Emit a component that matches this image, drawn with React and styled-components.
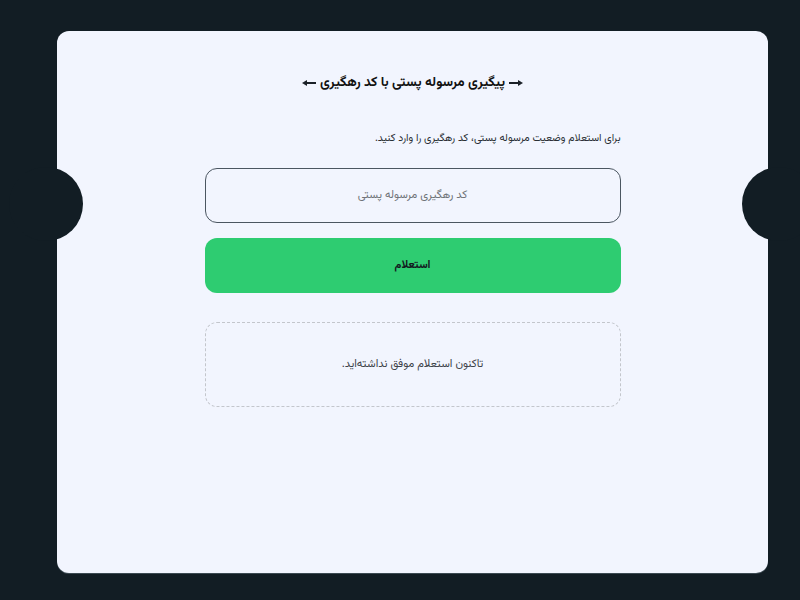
import React from "react";
import styled, { createGlobalStyle } from "styled-components";

const Global = createGlobalStyle`
  html, body { margin: 0; padding: 0; background: #121d24; }
  body { font-family: "Vazirmatn", "Noto Sans Arabic", "DejaVu Sans", sans-serif; }
  * { box-sizing: border-box; }
`;

const Page = styled.div`
  width: 800px;
  height: 600px;
  padding: 31px 32px 27px 57px;
  display: flex;
`;

const Card = styled.div`
  position: relative;
  flex: 1;
  background: #f2f5fe;
  border-radius: 12px;
  box-shadow: 0 1px 0 #3c4a52;
  padding-top: 40px;
  direction: rtl;
`;

const Notch = styled.div`
  position: absolute;
  top: 136px;
  width: 74px;
  height: 74px;
  border-radius: 50%;
  background: #121d24;
  ${(p) => (p.$side === "left" ? "left: -48px;" : "right: -48px;")}
`;

const Column = styled.div`
  width: 416px;
  margin: 0 auto;
  display: flex;
  flex-direction: column;
`;

const Title = styled.h1`
  margin: 0;
  display: flex;
  align-items: center;
  justify-content: center;
  gap: 4px;
  font-size: 13.5px;
  line-height: 24px;
  font-weight: 700;
  color: #111;
`;

const Subtitle = styled.p`
  margin: 34px 0 0;
  font-size: 10.5px;
  line-height: 20px;
  color: #2a2f35;
  text-align: right;
`;

const Input = styled.input`
  margin-top: 19px;
  height: 55px;
  width: 100%;
  border: 1px solid #4b5661;
  border-radius: 12px;
  background: transparent;
  text-align: center;
  direction: rtl;
  font-family: inherit;
  font-size: 11.2px;
  color: #333;
  outline: none;
  &::placeholder { color: #6f7378; }
`;

const Button = styled.button`
  margin-top: 15px;
  height: 55px;
  width: 100%;
  border: none;
  border-radius: 12px;
  background: #2ecc71;
  font-family: inherit;
  font-size: 11.2px;
  font-weight: 700;
  color: #13191f;
  cursor: pointer;
`;

const Empty = styled.div`
  margin-top: 29px;
  height: 85px;
  border: 1px dashed #c3c6cc;
  border-radius: 12px;
  display: flex;
  align-items: center;
  justify-content: center;
  font-size: 11.2px;
  color: #3d4249;
`;

const ArrowSvg = styled.svg`
  width: 14px;
  height: 6px;
  transform: ${(p) => (p.$dir === "left" ? "scaleX(-1)" : "none")};
`;

const Arrow = ({ dir }) => (
  <ArrowSvg $dir={dir} viewBox="0 0 14 6">
    <rect x="0" y="2" width="11" height="2" fill="#1b2128" />
    <path d="M9 0 L14 3 L9 6 Z" fill="#1b2128" />
  </ArrowSvg>
);

export default function App() {
  return (
    <>
      <Global />
      <Page>
        <Card>
          <Notch $side="left" />
          <Notch $side="right" />
          <Column>
            <Title>
              <Arrow dir="right" />
              <span>پیگیری مرسوله پستی با کد رهگیری</span>
              <Arrow dir="left" />
            </Title>
            <Subtitle>برای استعلام وضعیت مرسوله پستی، کد رهگیری را وارد کنید.</Subtitle>
            <Input placeholder="کد رهگیری مرسوله پستی" />
            <Button>استعلام</Button>
            <Empty>تاکنون استعلام موفق نداشته‌اید.</Empty>
          </Column>
        </Card>
      </Page>
    </>
  );
}
